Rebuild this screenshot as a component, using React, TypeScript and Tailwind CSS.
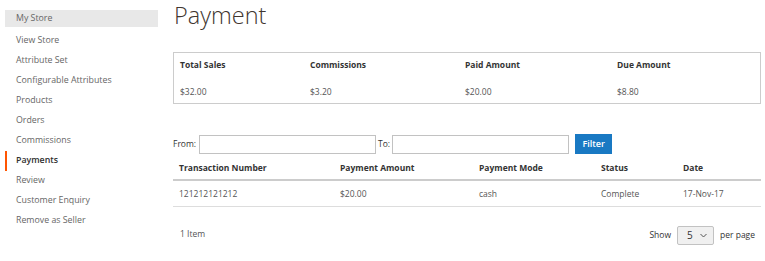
const menu = [
  'My Store',
  'View Store',
  'Attribute Set',
  'Configurable Attributes',
  'Products',
  'Orders',
  'Commissions',
  'Payments',
  'Review',
  'Customer Enquiry',
  'Remove as Seller',
];

const summary = [
  { label: 'Total Sales', value: '$32.00', w: 'w-[130px]' },
  { label: 'Commissions', value: '$3.20', w: 'w-[155px]' },
  { label: 'Paid Amount', value: '$20.00', w: 'w-[152px]' },
  { label: 'Due Amount', value: '$8.80', w: 'flex-1' },
];

const columns = [
  { label: 'Transaction Number', w: 'w-[161px]' },
  { label: 'Payment Amount', w: 'w-[139px]' },
  { label: 'Payment Mode', w: 'w-[122px]' },
  { label: 'Status', w: 'w-[82px]' },
  { label: 'Date', w: 'flex-1' },
];

const row = ['121212121212', '$20.00', 'cash', 'Complete', '17-Nov-17'];

export default function App() {
  return (
    <div className="flex w-[765px] h-[261px] bg-white text-[8.5px] text-[#555] font-['Open_Sans',sans-serif] overflow-hidden">
      {/* sidebar */}
      <div className="w-[153px] ml-[5px] mt-[10px] shrink-0">
        {menu.map((item, i) => {
          const active = item === 'Payments';
          return (
            <div
              key={item}
              className={`flex items-center text-[8.8px] ${
                i === 0 ? 'bg-[#e8e8e8] h-[17px] mb-[4px] pt-[1px]' : 'h-[20px]'
              } ${
                active
                  ? 'border-l-[2px] border-[#ff5501] pl-[9px] text-[#303030] font-semibold'
                  : 'pl-[11px] text-[#666]'
              }`}
            >
              {item}
            </div>
          );
        })}
      </div>

      {/* main */}
      <div className="ml-[15px] w-[588px]">
        <h1 className="text-[23.5px] font-light text-[#41362f] leading-[30px] h-[52px] pl-[1px]">
          Payment
        </h1>

        <div className="border border-[#ccc] h-[52px] px-[6px] flex">
          {summary.map((s) => (
            <div key={s.label} className={s.w}>
              <div className="font-bold text-[#333] mt-[6px] h-[13px]">{s.label}</div>
              <div className="mt-[14px] text-[#555]">{s.value}</div>
            </div>
          ))}
        </div>

        <div className="flex items-center mt-[30px] h-[20px]">
          <span className="text-[#333] mr-[3px] mt-[1px]">From:</span>
          <input className="w-[177px] h-[19px] border border-[#c2c2c2] bg-white outline-none" />
          <span className="text-[#333] ml-[2px] mr-[2px] mt-[1px]">To:</span>
          <input className="w-[177px] h-[19px] border border-[#c2c2c2] bg-white outline-none" />
          <button className="ml-[6px] w-[37px] h-[20px] bg-[#1979c3] border border-[#1979c3] text-white font-semibold text-[9px]">
            Filter
          </button>
        </div>

        <div className="flex border-b-[2px] border-[#ccc] mt-[1px] h-[26px] pt-[2px] items-center px-[6px] font-bold text-[#333]">
          {columns.map((c) => (
            <div key={c.label} className={c.w}>
              {c.label}
            </div>
          ))}
        </div>
        <div className="flex border-b border-[#ddd] h-[26px] pt-[1px] items-center px-[6px] text-[#555]">
          {row.map((v, i) => (
            <div key={v} className={columns[i].w}>
              {v}
            </div>
          ))}
        </div>

        <div className="flex items-center justify-between mt-[17px] pl-[7px]">
          <span className="text-[#555]">1 Item</span>
          <div className="flex items-center mt-[2px]">
            <span className="text-[#333] mr-[6px]">Show</span>
            <div className="w-[37px] h-[19px] border border-[#c2c2c2] rounded-[2px] bg-[#f0f0f0] flex items-center justify-between pl-[9px] pr-[6px] text-[#333] text-[10px]">
              <span>5</span>
              <svg width="7" height="5" viewBox="0 0 7 5" fill="none">
                <path d="M0.5 1 L3.5 4 L6.5 1" stroke="#555" strokeWidth="1" />
              </svg>
            </div>
            <span className="text-[#333] ml-[6px] mr-[6px]">per page</span>
          </div>
        </div>
      </div>
    </div>
  );
}
